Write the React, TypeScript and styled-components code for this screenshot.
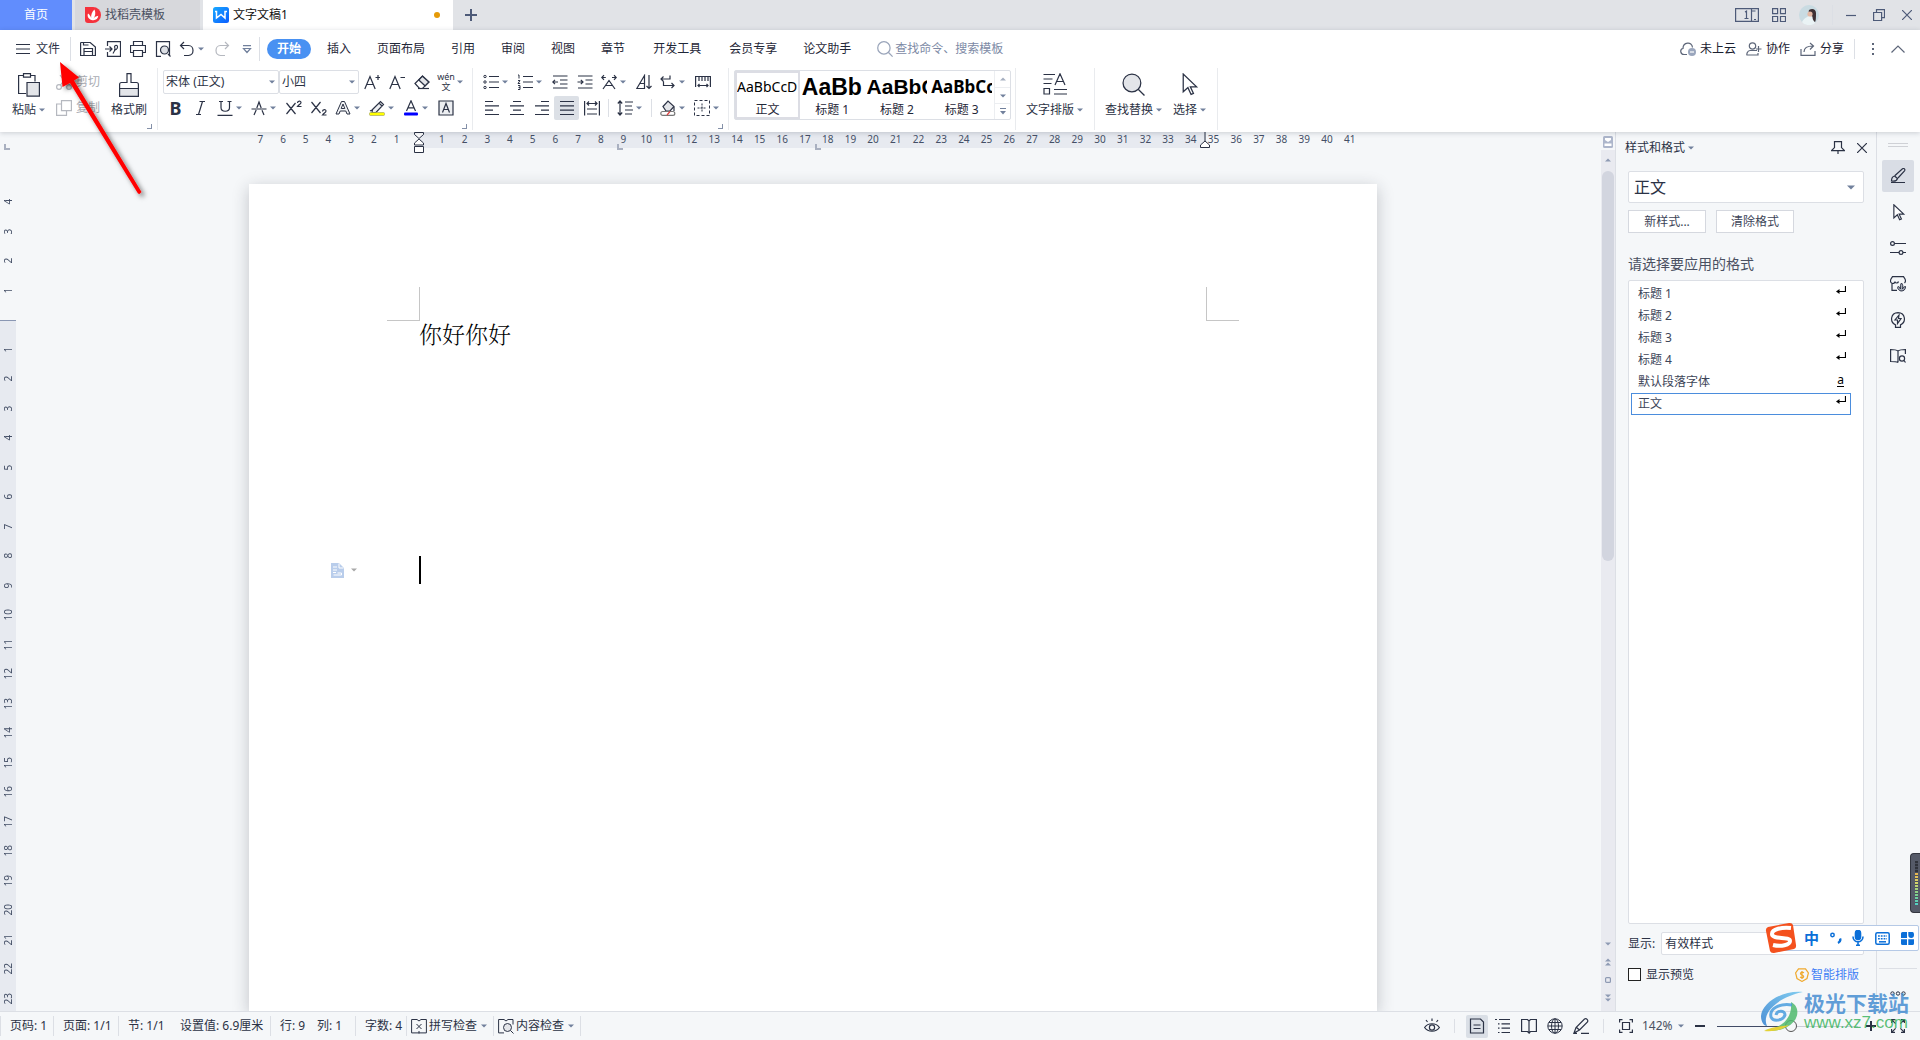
import React from 'react';
import styled, { createGlobalStyle, css } from 'styled-components';

const ink = '#2b3245';
const soft = '#71809c';
const line = '#dcdfe5';
const ui = `"Noto Sans", "Noto Sans CJK SC", sans-serif`;

const GlobalStyle = createGlobalStyle`
  *, *::before, *::after { box-sizing: border-box; }
  body { margin: 0; font: 12px/16px ${ui}; color: ${ink}; background: #f5f7f9; }
  button, input, select { font: inherit; color: inherit; margin: 0; padding: 0; border: 0; background: none; }
  button { white-space: nowrap; cursor: pointer; }
  svg { display: block; flex: none; }
  p, h2, ul { margin: 0; padding: 0; font-weight: 400; }
`;

/* ---------- icons ---------- */

type IconProps = { size?: number; w?: number; h?: number; color?: string; fill?: string; sw?: number; children: React.ReactNode };

const Icon = ({ size = 16, w, h, color = ink, fill = 'none', sw = 1.2, children }: IconProps) => (
  <svg
    width={w ?? size}
    height={h ?? size}
    viewBox={`0 0 ${w ?? size} ${h ?? size}`}
    fill={fill}
    stroke={color}
    strokeWidth={sw}
    aria-hidden="true"
  >
    {children}
  </svg>
);

const Caret = ({ color = soft, up = false }: { color?: string; up?: boolean }) => (
  <svg width="6" height="4" viewBox="0 0 6 4" aria-hidden="true">
    <path d={up ? 'M0 3.5h6L3 .5z' : 'M0 .5h6L3 3.5z'} fill={color} />
  </svg>
);

const icons = {
  save: <Icon><path d="M.6 1.5h9.6l5.2 4.6v8.4H13M.6 1.5v13H4M4 14.500V7.500h8.500v7H4M4.500 10.500h7.500M3.500 1.500v2.500h5" /></Icon>,
  exportPdf: <Icon><path d="M2.500 5V.6h13v14.800h-13V11M0 8h6.500M4.500 5.500 7 8l-2.500 2.500M8 12.500c2-3 2.500-5 1.500-6.500 0-2 3-2.500 3 0 0 2-2 3-3.500 3" /></Icon>,
  print: <Icon><path d="M3.500 4.500v-4h9v4M3.500 11.500h-3v-7h15v7h-3M3.500 9.500h9v6h-9z" /></Icon>,
  preview: <Icon><path d="M6 15.400H1.500V.6h13v14M13 13l2.500 2.500" /><circle cx="9.500" cy="9" r="4" fill="#dde0e5" /></Icon>,
  undo: <Icon><path d="M5 1 1.500 4.500 5 8M2 4.500h7.500c6 0 6 10 0 10H5" /></Icon>,
  redo: <Icon color="#b5b8bf"><path d="M11 1l3.500 3.500L11 8M14 4.500H6.500c-6 0-6 10 0 10H11" /></Icon>,
  more: <Icon w={10} h={9} color={soft}><path d="M1 .6h8M1.500 3.500h7L5 7.500z" /></Icon>,
  fontUp: <Icon><path d="M.8 15 6 2.500 11.200 15M2.600 10.500h6.800M11.500 3.500h5M14 1v5" /></Icon>,
  fontDown: <Icon><path d="M.8 15 6 2.500 11.200 15M2.600 10.500h6.800M11.500 3.500h4.500" /></Icon>,
  eraser: <Icon><path d="M1 9.500 8.500 2l6.500 6-6.500 6.500H5.500z" fill="#fff" /><path d="M4.800 6 11 11.800l3.800-3.800L8.500 2.200z" fill="#e3e5e9" /><path d="M4 14.500h11" /></Icon>,
  italic: <Icon><path d="M6.500 1.500H12M9.500 1.500l-4 13M3 14.500h5" /></Icon>,
  underline: <Icon><path d="M2 1.500h4M10.500 1.500h4M4 1.500v6c0 5 8.500 5 8.500 0v-6M.5 15.400h15" /></Icon>,
  strike: <Icon><path d="M3 15l2.200-5M5.800 8 8 2l2.200 6M11 10.200 13 15M.5 9h15" /></Icon>,
  sup: <Icon><path d="M.5 3l9 11M9.500 3l-9 11M11.500 3c0-2.500 3.500-2.500 3.500-.500 0 1.500-2 2-3.500 4h4" /></Icon>,
  sub: <Icon><path d="M.5 2l9 11M9.500 2l-9 11M11.500 11.500c0-2.500 3.500-2.500 3.500-.500 0 1.500-2 2-3.500 4h4" /></Icon>,
  effectA: <Icon><path d="M1 14 6.500 1.500h3L15 14h-3l-1.200-3H5.200L4 14zM6.200 8.500h3.600L8 4z" fill="#f2f3f5" strokeWidth="1" /></Icon>,
  highlight: <Icon><path d="M3.500 9.500l8-8 3 3-7.500 8h-4zM10 3l3 3M1 11l2-1" fill="#eef0f3" /><rect x=".5" y="12.500" width="15" height="3" rx="1" fill="#ff0" stroke="#9a9a60" strokeWidth=".6" /></Icon>,
  colorA: <Icon><path d="M3.500 11 8 .8 12.500 11M5 7.800h6" /><rect x="1" y="12.500" width="14" height="3" rx="1" fill="#00f" stroke="none" /></Icon>,
  shadeA: <Icon><path d="M1 1h14v14H1z" fill="#eceef1" /><path d="M4.500 12.500 8 3.500l3.500 9M5.700 9.500h4.600" /></Icon>,
  bullets: <Icon><path d="M6 2.500h10M6 8h10M6 13.500h10" /><g strokeWidth="1"><circle cx="2" cy="2.500" r="1.200" /><circle cx="2" cy="8" r="1.200" /><circle cx="2" cy="13.500" r="1.200" /></g></Icon>,
  numbers: <Icon><path d="M6 2.500h10M6 8h10M6 13.500h10" /><path strokeWidth="1" d="M1 1h1v3.500M1 6.500h2L1 9.500h2.200M1 11.500h2v4H1M1.500 13.500H3" /></Icon>,
  outdent: <Icon><path d="M1 2h14.500M8 6h7.500M8 10h7.500M1 14h14.500M.8 8H6M3 5.800.8 8 3 10.200" /></Icon>,
  indent: <Icon><path d="M1 2h14.500M8.500 6h7M8.500 10h7M1 14h14.500M.5 8h5.500M3.800 5.800 6 8l-2.200 2.200" /></Icon>,
  fitText: <Icon><path d="M2 15 8 6.500 14 15M4.500 11.500h7M.8 3.500h4M3 1.200.8 3.500 3 5.800M11 3.500h4.200M13 1.200l2.200 2.300L13 5.800" /></Icon>,
  sortA: <Icon><path d="M.8 14.500 8.500 1.500v13zM4 9.500h4.500M13 1v13.500M10.500 12l2.500 2.500 2.500-2.500" /></Icon>,
  wrapMark: <Icon><path d="M1 5h9V1.500M3.500 2.500 1 5l2.500 2.500M3.500 7.500v4h10.500M11.500 9l2.500 2.500-2.500 2.500" /></Icon>,
  rulerIcon: <Icon><path d="M.6 13V2.500h14.800V13M.6 8.500v4.500M4 3v4M7 3v4M10 3v4M13 3v4M3 11.500h10M4.500 10 3 11.500 4.500 13M11.500 10l1.500 1.500-1.500 1.500" /></Icon>,
  left: <Icon><path d="M1 1.500h8M1 5.800h14M1 10.200h8M1 14.500h14" /></Icon>,
  center: <Icon><path d="M4 1.500h8M1 5.800h14M4 10.200h8M1 14.500h14" /></Icon>,
  right: <Icon><path d="M7 1.500h8M1 5.800h14M7 10.200h8M1 14.500h14" /></Icon>,
  justify: <Icon><path d="M1 1.500h14M1 5.800h14M1 10.200h14M1 14.500h14" /></Icon>,
  distribute: <Icon><path d="M.6 1v14.500M15.400 1v14.500M3 3.500h10M5 1.500l-2 2 2 2M11 1.500l2 2-2 2M3 9h10M3 14h10" /></Icon>,
  spacing: <Icon><path d="M3 1v14M.8 3.500 3 1l2.200 2.500M.8 12.500 3 15l2.200-2.500M8 2h8M8 6h7M8 10h8M8 14h7" /></Icon>,
  fillPot: <Icon><path d="M3 6.500 8 1l6 5.500-4 4.500H6z" fill="#e3e5e9" /><path d="M14 7v4" /><rect x=".8" y="11.500" width="14" height="3.800" rx="1.900" fill="#fff" stroke="#777" /><path d="M7 15l3-3.500" stroke="#e04040" /></Icon>,
  borders: <Icon sw={1}><path d="M.5 .5h15v15H.5z" strokeDasharray="3 2" /><path d="M8 3.500v9M3.500 8h9" strokeDasharray="2 1" /></Icon>,
};

const PasteIcon = () => (
  <Icon w={22} h={24}><path d="M5 2.500H.6v18h7.500M13 2.500h4v6" /><path d="M5.500.6h7v3.500h-7z" /><path d="M9 9.500h12.400v13.600H9z" fill="#e3e5e9" /></Icon>
);
const BrushIcon = () => (
  <Icon w={20} h={24}><path d="M8 .6h4v8.900h5.500c1 0 1.900 1 1.900 2v11.900H.6V11.500c0-1 .9-2 1.900-2H8z" /><path d="M.6 15.500h18.800v7.900H.6z" fill="#e3e5e9" /></Icon>
);
const ScissorsIcon = () => (
  <Icon color="#b5b8bf"><circle cx="3" cy="13" r="2.400" /><circle cx="13" cy="13" r="2.400" /><path d="M4.500 11 12 1M11.500 11 4 1" /></Icon>
);
const CopyIcon = () => (
  <Icon color="#b5b8bf"><path d="M5.500.6h9.900v10H5.500z" /><path d="M5.500 4H.6v11.400h9.900v-4.800" /></Icon>
);
const CursorIcon = ({ s = 22 }: { s?: number }) => (
  <svg width={s} height={s} viewBox="0 0 22 22" fill="#fff" stroke={ink} strokeWidth={s > 20 ? 1.2 : 1.5} aria-hidden="true">
    <path d="M5 1v17l4.500-4 3 6.500 2.300-1-3-6.300h6z" />
  </svg>
);
const SearchIcon = ({ s = 16, color = '#9aa5ba', fill = 'none' }: { s?: number; color?: string; fill?: string }) => (
  <svg width={s} height={s} viewBox="0 0 22 22" fill={fill} stroke={color} strokeWidth={s > 20 ? 1.2 : 1.7} aria-hidden="true">
    <circle cx="9.500" cy="9.500" r="8.500" /><path d="M15.500 15.500 21.500 21.500" />
  </svg>
);

/* ---------- window shell ---------- */

const Window = styled.div`
  position: relative;
  height: 100vh;
  display: flex;
  flex-direction: column;
  overflow: hidden;
`;

const TitleBar = styled.header`
  display: flex;
  gap: 3px;
  height: 30px;
  flex: none;
  background: #e1e3e7;
`;

const Tab = styled.button<{ $kind: 'home' | 'idle' | 'active' }>`
  display: flex;
  align-items: center;
  gap: 4px;
  padding: 0 10px;
  width: ${p => ({ home: 72, idle: 125, active: 250 }[p.$kind])}px;
  justify-content: ${p => (p.$kind === 'home' ? 'center' : 'flex-start')};
  background: ${p => ({ home: '#618dfd', idle: '#d7d8dc', active: '#fff' }[p.$kind])};
  color: ${p => ({ home: '#fff', idle: '#4a5061', active: '#111' }[p.$kind])};
`;

const ModifiedDot = styled.span`
  width: 6px;
  height: 6px;
  margin: 0 3px 0 auto;
  border-radius: 50%;
  background: #e59a08;
`;

const IconButton = styled.button<{ $w?: number }>`
  display: flex;
  align-items: center;
  justify-content: center;
  width: ${p => p.$w ?? 24}px;
`;

const WindowControls = styled.div`
  display: flex;
  align-items: center;
  gap: 13px;
  margin-left: auto;
  padding-right: 8px;
`;

const VLine = styled.span<{ $h?: number; $m?: number }>`
  width: 1px;
  height: ${p => p.$h ?? 24}px;
  margin: 0 ${p => p.$m ?? 0}px;
  flex: none;
  background: ${line};
`;

const Ribbon = styled.div`
  position: relative;
  z-index: 2;
  flex: none;
  background: #fff;
  box-shadow: 0 1px 5px rgba(30, 40, 60, 0.2);
`;

const MenuRow = styled.nav`
  display: flex;
  align-items: center;
  height: 38px;
`;

const FileButton = styled.button`
  display: flex;
  align-items: center;
  gap: 6px;
  padding: 0 10px 0 16px;
`;

const Tool = styled.button<{ $on?: boolean; $caret?: boolean }>`
  display: flex;
  align-items: center;
  gap: 3px;
  width: ${p => (p.$caret ? 34 : 25)}px;
  height: 24px;
  padding-left: ${p => (p.$caret ? 4 : 0)}px;
  justify-content: ${p => (p.$caret ? 'flex-start' : 'center')};
  border-radius: 2px;
  background: ${p => (p.$on ? '#dce0e6' : 'none')};
  overflow: visible;
`;

const QuickTools = styled.div`
  display: flex;
  padding: 0 0 0 4px;
`;

const MenuTabs = styled.div`
  display: flex;
  align-items: center;
  padding-left: 7px;
`;

const MenuTab = styled.button<{ $on?: boolean; $wide?: boolean }>`
  height: 20px;
  padding: 0 ${p => (p.$wide ? 15 : 13)}px;
  color: #1f2738;
  ${p => p.$on && css`
    margin-right: 3px;
    padding: 0 10px;
    border-radius: 10px;
    color: #fff;
    font-weight: 700;
    background: #4991f2;
  `}
`;

const SearchBox = styled.label`
  display: flex;
  align-items: center;
  gap: 2px;
  margin-left: 13px;
  input { width: 120px; outline: 0; }
  input::placeholder { color: #7d8aa5; opacity: 1; }
`;

const CloudActions = styled.div`
  display: flex;
  align-items: center;
  gap: 10px;
  margin-left: auto;
  padding-right: 15px;
`;

const CloudAction = styled.button`
  display: flex;
  align-items: center;
  gap: 4px;
  color: #1a2030;
`;

const Groups = styled.div`
  display: flex;
  height: 64px;
`;

const Group = styled.section<{ $l?: number; $r?: number }>`
  position: relative;
  display: flex;
  gap: 11px;
  height: 62px;
  padding: 2px ${p => p.$r ?? 4}px 0 ${p => p.$l ?? 5}px;
  border-right: 1px solid #e9ebee;
`;

const Launcher = styled.button`
  position: absolute;
  right: 5px;
  bottom: 1px;
  width: 5px;
  height: 5px;
  border: solid #8490a8;
  border-width: 0 1px 1px 0;
`;

const Stack = styled.div`
  display: flex;
  flex-direction: column;
  gap: 2px;
`;

const Row = styled.div<{ $gap?: number }>`
  display: flex;
  align-items: center;
  height: 24px;
  gap: ${p => p.$gap ?? 0}px;
`;

const BigTool = styled.button`
  display: flex;
  flex-direction: column;
  align-items: center;
  justify-content: space-between;
  height: 48px;
  padding-top: 3px;
`;

const Labelled = styled.span`
  display: flex;
  align-items: center;
  gap: 3px;
`;

const SmallTool = styled.button`
  display: flex;
  align-items: center;
  gap: 4px;
  height: 24px;
  color: #a9acb3;
`;

const Picker = styled.label<{ $w?: number; $grow?: boolean; $h?: number; $inset?: number; $size?: number; $edge?: number }>`
  position: relative;
  display: flex;
  align-items: center;
  width: ${p => (p.$w ? `${p.$w}px` : 'auto')};
  height: ${p => p.$h ?? 24}px;
  flex: ${p => (p.$grow ? '1' : 'none')};
  border: 1px solid ${line};
  border-radius: 2px;
  background: #fff;
  select {
    appearance: none;
    width: 100%;
    height: 100%;
    padding-left: ${p => p.$inset ?? 2}px;
    font-size: ${p => p.$size ?? 12}px;
    outline: 0;
  }
  svg { position: absolute; right: ${p => p.$edge ?? 3}px; pointer-events: none; }
`;

const Pinyin = styled.span`
  display: flex;
  flex-direction: column;
  align-items: center;
  width: 16px;
  font-size: 9px;
  line-height: 10px;
`;

const BoldGlyph = styled.b`
  font-size: 18px;
  line-height: 24px;
`;

const Gallery = styled.div`
  display: flex;
  width: 277px;
  height: 50px;
  border: 1px solid ${line};
  border-radius: 2px;
`;

const StyleCard = styled.button<{ $on?: boolean }>`
  flex: 1;
  min-width: 0;
  display: flex;
  flex-direction: column;
  align-items: center;
  justify-content: flex-end;
  height: 48px;
  padding-bottom: 1px;
  overflow: hidden;
  color: #1f2738;
  box-shadow: ${p => (p.$on ? 'inset 0 0 0 2px #dcdde4' : 'none')};
`;

const Sample = styled.span<{ $size: number; $face: string; $bold?: boolean }>`
  display: block;
  align-self: stretch;
  margin: 0 2px;
  overflow: hidden;
  text-align: left;
  color: #000;
  line-height: 30px;
  font-size: ${p => p.$size}px;
  font-weight: ${p => (p.$bold ? 700 : 400)};
  font-family: "${p => p.$face}", sans-serif;
`;

const GalleryScroll = styled.div`
  display: grid;
  grid-template-rows: repeat(3, 1fr);
  width: 16px;
  border-left: 1px solid #eceef1;
  button { display: flex; align-items: center; justify-content: center; }
  button + button { border-top: 1px solid #eceef1; }
`;

/* ---------- workspace ---------- */

const Workspace = styled.main`
  display: flex;
  flex: 1;
  min-height: 0;
`;

const VRuler = styled.div`
  width: 16px;
  flex: none;
  padding-top: 55px;
  overflow: hidden;
  background: linear-gradient(#f5f7f9 188px, #8a97b3 188px, #8a97b3 189px, #e7eaf0 189px);
`;

const VScale = styled.div`
  display: grid;
  grid-template-rows: repeat(28, 1fr);
  height: 826px;
  font-size: 10px;
  line-height: 16px;
  color: #444f66;
  span { writing-mode: vertical-rl; transform: rotate(180deg); text-align: center; width: 16px; }
`;

const Center = styled.div`
  flex: 1;
  min-width: 0;
  display: flex;
  flex-direction: column;
`;

const HRuler = styled.div`
  display: flex;
  justify-content: center;
  height: 16px;
  flex: none;
  padding-left: 9px;
`;

const HStrip = styled.div`
  position: relative;
  width: 1128px;
  background: linear-gradient(90deg, transparent 171px, #e7eaf0 171px, #e7eaf0 957px, transparent 957px);
`;

const HScale = styled.div`
  display: grid;
  grid-template-columns: repeat(49, 1fr);
  width: 1112px;
  font-size: 10px;
  line-height: 15px;
  text-align: center;
  color: #444f66;
`;

const Marker = styled.span<{ $x: number; $y?: number }>`
  position: absolute;
  left: ${p => p.$x}px;
  top: ${p => p.$y ?? 0}px;
`;

const Canvas = styled.div`
  flex: 1;
  min-height: 0;
  display: flex;
  justify-content: center;
  padding: 36px 0 0 9px;
  overflow: hidden;
`;

const Page = styled.article`
  width: 1128px;
  padding-top: 103px;
  background: #fff;
  box-shadow: 0 4px 16px rgba(30, 35, 45, 0.24);
`;

const Corners = styled.div`
  display: flex;
  justify-content: space-between;
  padding: 0 138px;
`;

const Corner = styled.span<{ $side: 'left' | 'right' }>`
  width: 33px;
  height: 34px;
  border-bottom: 1px solid #c6c6c6;
  border-${p => (p.$side === 'left' ? 'right' : 'left')}: 1px solid #c6c6c6;
`;

const BodyText = styled.p`
  padding-left: 170px;
  font: 300 23px/26px "Noto Serif CJK SC", "Noto Sans CJK SC", serif;
  color: #000;
`;

const CaretLine = styled.div`
  display: flex;
  align-items: center;
  height: 28px;
  margin-top: 209px;
  padding-left: 82px;
`;

const PasteTag = styled.button`
  display: flex;
  align-items: center;
  gap: 7px;
  width: 88px;
`;

const TextCursor = styled.span`
  width: 2px;
  height: 28px;
  background: #000;
`;

const ScrollColumn = styled.div`
  display: flex;
  flex-direction: column;
  align-items: center;
  width: 14px;
  flex: none;
  padding: 4px 0;
  background: linear-gradient(#f5f7f9 18px, #e9eaf0 18px);
`;

const ScrollTrack = styled.div`
  flex: 1;
  width: 12px;
`;

const ScrollThumb = styled.div`
  height: 51%;
  border-radius: 6px;
  background: #d2d5df;
`;

const ScrollButton = styled.button<{ $h?: number }>`
  display: flex;
  flex-direction: column;
  align-items: center;
  justify-content: center;
  width: 14px;
  height: ${p => p.$h ?? 18}px;
`;

/* ---------- style panel ---------- */

const Panel = styled.aside`
  display: flex;
  flex-direction: column;
  width: 262px;
  flex: none;
  padding: 0 12px 0 12px;
  border: solid ${line};
  border-width: 0 1px;
`;

const PanelHead = styled.div`
  display: flex;
  align-items: center;
  justify-content: space-between;
  height: 31px;
  margin: 0 -3px 8px;
`;

const PanelButtons = styled.div`
  display: flex;
  gap: 10px;
  margin-top: 7px;
  button { width: 78px; height: 23px; border: 1px solid #d5d8df; background: #fff; color: #3d4558; }
`;

const PanelTitle = styled.h2`
  margin: 21px 0 6px;
  font-size: 14px;
  line-height: 20px;
  color: #4a5061;
`;

const StyleList = styled.ul`
  flex: 1;
  padding: 2px 12px 0 2px;
  list-style: none;
  border: 1px solid ${line};
  border-radius: 2px;
  background: #fff;
`;

const StyleItem = styled.li<{ $on?: boolean }>`
  display: flex;
  align-items: center;
  justify-content: space-between;
  height: 22px;
  padding: 0 4px 0 6px;
  color: #3d4558;
  border: 1px solid ${p => (p.$on ? '#4b8ddd' : 'transparent')};
  svg { margin-bottom: 8px; }
`;

const UnderA = styled.span`
  margin: 0 2px 4px 0;
  line-height: 12px;
  border-bottom: 1px solid #000;
  color: #000;
`;

const PanelRow = styled.div`
  display: flex;
  align-items: center;
  justify-content: space-between;
  gap: 6px;
  margin-top: 8px;
  height: 23px;
`;

const Check = styled.label`
  display: flex;
  align-items: center;
  gap: 5px;
  input { appearance: none; width: 13px; height: 13px; border: 1px solid #222; background: #fff; }
`;

const SmartLink = styled.a`
  display: flex;
  align-items: center;
  gap: 2px;
  margin-right: 5px;
  color: #3f7ef5;
  text-decoration: none;
`;

const PanelFoot = styled.div`
  height: 56px;
  display: flex;
  flex-direction: column;
`;

const Rail = styled.nav`
  display: flex;
  flex-direction: column;
  align-items: center;
  gap: 4px;
  width: 43px;
  flex: none;
  padding: 11px 1px 0 0;
`;

const Grip = styled.span`
  width: 20px;
  height: 4px;
  margin-bottom: 9px;
  border: solid #cfd1d6;
  border-width: 1px 0;
`;

const RailButton = styled.button<{ $on?: boolean }>`
  display: flex;
  align-items: center;
  justify-content: center;
  width: 32px;
  height: 32px;
  border-radius: 2px;
  background: ${p => (p.$on ? '#d9dde5' : 'none')};
`;

const RailFoot = styled.div`
  display: flex;
  justify-content: center;
  width: 38px;
  height: 43px;
  margin-top: auto;
  padding-top: 22px;
  border-top: 1px solid ${line};
`;

/* ---------- status bar ---------- */

const StatusBar = styled.footer`
  display: flex;
  align-items: center;
  justify-content: space-between;
  height: 29px;
  flex: none;
  border-top: 1px solid ${line};
`;

const StatusGroup = styled.div`
  display: flex;
  align-items: center;
`;

const StatusText = styled.span<{ $w: number }>`
  width: ${p => p.$w}px;
  padding-left: 9px;
  white-space: nowrap;
`;

const StatusButton = styled.button`
  display: flex;
  align-items: center;
  gap: 2px;
  padding: 0 6px 0 4px;
  svg:last-child { margin-left: 2px; }
`;

const ViewButton = styled.button<{ $on?: boolean }>`
  display: flex;
  align-items: center;
  justify-content: center;
  width: 22px;
  height: 23px;
  margin: 0 2px;
  border-radius: 2px;
  background: ${p => (p.$on ? '#dadfe6' : 'none')};
`;

const ZoomValue = styled.button`
  display: flex;
  align-items: center;
  gap: 5px;
  width: 53px;
  margin-left: 3px;
  color: #4a5061;
`;

const ZoomSlider = styled.input`
  appearance: none;
  width: 141px;
  height: 14px;
  margin: 0 8px 0 12px;
  background: linear-gradient(90deg, #414b66 53%, #c9cdd6 53%) center / 100% 1px no-repeat;
  &::-webkit-slider-thumb {
    appearance: none;
    width: 12px;
    height: 12px;
    border: 1px solid #555;
    border-radius: 50%;
    background: #f5f7f9;
  }
`;

const ScreenButtons = styled.div`
  padding: 0 9px;
`;

/* ---------- floating overlays ---------- */

const Floating = styled.div<{ $right: number; $bottom: number }>`
  position: absolute;
  z-index: 5;
  right: ${p => p.$right}px;
  bottom: ${p => p.$bottom}px;
  display: flex;
  align-items: center;
`;

const ImeBar = styled.div`
  display: flex;
  align-items: center;
  justify-content: space-between;
  width: 138px;
  height: 26px;
  padding: 0 4px 0 22px;
  margin-left: -16px;
  border: 1px solid #b5c9e6;
  border-radius: 2px;
  background: #fff;
  font-weight: 700;
  font-size: 15px;
  color: #0b6fd8;
`;

const SogouMark = styled.span`
  position: relative;
  z-index: 1;
`;

const LevelMeter = styled.div`
  display: flex;
  justify-content: flex-end;
  width: 10px;
  height: 60px;
  padding: 7px 2px 7px 4px;
  border: 1px solid #33363f;
  border-right: 0;
  border-radius: 4px 0 0 4px;
  background: #555a68;
  i {
    width: 4px;
    background:
      repeating-linear-gradient(transparent 0 2px, #4a4e5b 2px 3px),
      linear-gradient(#2f323a 25%, #e8b04c 26%, #d5d56a 50%, #7fd08a 75%, #4fd0c8);
  }
`;

const Watermark = styled.div`
  display: flex;
  flex-direction: column;
  font: 700 21px/22px "Noto Sans CJK SC", sans-serif;
  color: rgba(62, 137, 208, 0.82);
  small { font: 500 17px/20px "Liberation Sans", sans-serif; color: rgba(60, 180, 95, 0.85); }
`;

const ArrowLayer = styled.svg`
  position: absolute;
  z-index: 6;
  left: 50px;
  top: 55px;
  pointer-events: none;
`;

/* ---------- pieces ---------- */

type ToolName = keyof typeof icons;
const T = ({ name, label, caret, on }: { name: ToolName; label: string; caret?: boolean; on?: boolean }) => (
  <Tool aria-label={label} $caret={caret} $on={on}>
    {icons[name]}
    {caret && <Caret />}
  </Tool>
);

const menu: { text: string; wide?: boolean }[] = [
  { text: '插入' }, { text: '页面布局' }, { text: '引用' }, { text: '审阅' }, { text: '视图' }, { text: '章节' },
  { text: '开发工具', wide: true }, { text: '会员专享' }, { text: '论文助手' },
];

const cards = [
  { sample: 'AaBbCcD', name: '正文', size: 14, face: 'Noto Sans', bold: false },
  { sample: 'AaBb', name: '标题 1', size: 23, face: 'Liberation Sans', bold: true },
  { sample: 'AaBbC', name: '标题 2', size: 21, face: 'Liberation Sans', bold: true },
  { sample: 'AaBbCc', name: '标题 3', size: 17, face: 'Noto Sans', bold: true },
];

const listed = ['标题 1', '标题 2', '标题 3', '标题 4', '默认段落字体', '正文'];
const horizontal = Array.from({ length: 49 }, (_, i) => i - 7);
const vertical = Array.from({ length: 28 }, (_, i) => i - 4);

const Return = () => (
  <Icon w={10} h={9} color="#000"><path d="M9.500 0v5.500H2" /><path d="M0 5.500 3.500 3v5z" fill="#000" stroke="none" /></Icon>
);

const Title = () => (
  <TitleBar>
    <Tab $kind="home">首页</Tab>
    <Tab $kind="idle">
      <Icon color="none"><path d="M0 0h8a8 8 0 0 1 0 16H3a3 3 0 0 1-3-3z" fill="#f5323c" /><path d="M6.500 13C3 11.500 2 9 3 6.500c1.500 1 2.500 2.500 3.200 4.500C5.800 8 7 4.500 9.500 2.500c1.500 3.500.8 6.500-1.200 9.500 1-1.500 2.700-3 5-3.200-.3 3-2.800 5.200-6.800 4.200z" fill="#fff" /></Icon>
      找稻壳模板
    </Tab>
    <Tab $kind="active">
      <Icon color="none"><defs><linearGradient id="w" x2="1" y2="1"><stop stopColor="#19a9ff" /><stop offset="1" stopColor="#0a5cff" /></linearGradient></defs><rect width="16" height="16" rx="2.500" fill="url(#w)" /><path d="M2 4.500h1.500V11L8 7.500l4 3.500V4.500h2" fill="none" stroke="#fff" strokeWidth="1.500" /></Icon>
      文字文稿1
      <ModifiedDot />
    </Tab>
    <IconButton aria-label="新建标签" $w={30}><Icon w={12} h={12} sw={2} color="#4d5a78"><path d="M6 0v12M0 6h12" /></Icon></IconButton>
    <WindowControls>
      <IconButton aria-label="窗口布局"><Icon w={24} h={14} color="#4d5a78"><path d="M.6.6h22.800v12.800H.6zM16.500.6v12.800M10 4l1.500-1v7.500M9.500 10.500h4M19 11.500h2M20.500 3h-4" /></Icon></IconButton>
      <IconButton aria-label="应用" $w={14}><Icon size={14} color="#4d5a78"><path d="M.6.600h5v5h-5zM8.500.600h5v5h-5zM.6 8.500h5v5h-5zM8.500 8.500h5v5h-5z" /></Icon></IconButton>
      <IconButton aria-label="账户" $w={20}><Icon size={20} color="none"><circle cx="10" cy="10" r="10" fill="#c9dbe2" /><path d="M3 17c3-5 6-5 8-7l3 1 2 7c-3 3-10 3-13-1z" fill="#eaf3f5" /><path d="M10 5c3-2 7-1 7 3s0 8-1 9c-3-2-2-5-3-6-2 1-4-3-3-6z" fill="#3d3034" /><circle cx="11" cy="9" r="2.600" fill="#e5b9a5" /></Icon></IconButton>
      <VLine $h={20} />
      <IconButton aria-label="最小化" $w={10}><Icon w={10} h={10} color="#4d5a78"><path d="M0 5.500h10" /></Icon></IconButton>
      <IconButton aria-label="还原" $w={20}><Icon w={12} h={12} color="#4d5a78"><path d="M.6 3.500h8v8h-8zM3.500 3.500V.6h8v8H8.600" /></Icon></IconButton>
      <IconButton aria-label="关闭" $w={10}><Icon w={10} h={10} color="#4d5a78"><path d="M0 0l10 10M10 0 0 10" /></Icon></IconButton>
    </WindowControls>
  </TitleBar>
);

const Menu = () => (
  <MenuRow>
    <FileButton><Icon w={14} h={10} sw={1}><path d="M0 .5h14M0 5h14M0 9.500h14" /></Icon>文件</FileButton>
    <VLine />
    <QuickTools>
      <T name="save" label="保存" /><T name="exportPdf" label="输出为PDF" /><T name="print" label="打印" /><T name="preview" label="打印预览" />
      <T name="undo" label="撤销" caret /><T name="redo" label="恢复" /><T name="more" label="更多" />
    </QuickTools>
    <VLine />
    <MenuTabs>
      <MenuTab $on>开始</MenuTab>
      {menu.map(m => <MenuTab key={m.text} $wide={m.wide}>{m.text}</MenuTab>)}
    </MenuTabs>
    <SearchBox>
      <SearchIcon s={16} />
      <input placeholder="查找命令、搜索模板" aria-label="查找命令、搜索模板" />
    </SearchBox>
    <CloudActions>
      <CloudAction><Icon color="#5d6679"><path d="M7 13.500H4C0 13.500-.3 8 3 7.500 3 1 12 0 12.500 6.500" /><circle cx="12" cy="11" r="4" fill="#9aa6bd" stroke="none" /><path d="M10 11h4" stroke="#fff" /></Icon>未上云</CloudAction>
      <CloudAction><Icon color="#5d6679"><circle cx="6.500" cy="5" r="3.200" /><path d="M11 9.500H4c-3 0-3.500 4.500-3 4.500h11v-2M12.500 5v6M10 8h5.500" /></Icon>协作</CloudAction>
      <CloudAction><Icon color="#5d6679"><path d="M1 8v6.400h14V10M4 11c0-4 3-6 9-6M10 2l3.500 3L10 8.500" /></Icon>分享</CloudAction>
      <VLine $h={20} />
      <IconButton aria-label="更多" $w={16}><Icon w={4} h={12} color="none"><path d="M1 0h2v2H1zM1 5h2v2H1zM1 10h2v2H1z" fill="#5d6679" /></Icon></IconButton>
      <IconButton aria-label="收起功能区" $w={14}><Icon w={14} h={8} color="#5d6679"><path d="M.5 7.500 7 1l6.500 6.500" /></Icon></IconButton>
    </CloudActions>
  </MenuRow>
);

const Tools = () => (
  <Groups>
    <Group $l={12} $r={10} aria-label="剪贴板">
      <BigTool><PasteIcon /><Labelled>粘贴 <Caret /></Labelled></BigTool>
      <Stack>
        <SmallTool><ScissorsIcon />剪切</SmallTool>
        <SmallTool><CopyIcon />复制</SmallTool>
      </Stack>
      <BigTool><BrushIcon />格式刷</BigTool>
      <Launcher aria-label="剪贴板选项" />
    </Group>
    <Group aria-label="字体">
      <Stack>
        <Row>
          <Picker $w={116}><select aria-label="字体"><option>宋体 (正文)</option></select><Caret /></Picker>
          <Picker $w={80}><select aria-label="字号"><option>小四</option></select><Caret /></Picker>
          <T name="fontUp" label="增大字号" /><T name="fontDown" label="减小字号" /><T name="eraser" label="清除格式" />
          <Tool aria-label="拼音指南" $caret><Pinyin><span>wén</span><span>文</span></Pinyin><Caret /></Tool>
        </Row>
        <Row>
          <Tool aria-label="加粗"><BoldGlyph>B</BoldGlyph></Tool>
          <T name="italic" label="倾斜" /><T name="underline" label="下划线" caret /><T name="strike" label="删除线" caret />
          <T name="sup" label="上标" /><T name="sub" label="下标" /><T name="effectA" label="文字效果" caret />
          <T name="highlight" label="突出显示" caret /><T name="colorA" label="字体颜色" caret /><T name="shadeA" label="字符底纹" />
        </Row>
      </Stack>
      <Launcher aria-label="字体选项" />
    </Group>
    <Group $l={6} aria-label="段落">
      <Stack>
        <Row>
          <T name="bullets" label="项目符号" caret /><T name="numbers" label="编号" caret /><T name="outdent" label="减少缩进" /><T name="indent" label="增加缩进" />
          <T name="fitText" label="中文版式" caret /><T name="sortA" label="排序" /><T name="wrapMark" label="显示标记" caret /><T name="rulerIcon" label="制表位" />
        </Row>
        <Row>
          <T name="left" label="左对齐" /><T name="center" label="居中" /><T name="right" label="右对齐" /><T name="justify" label="两端对齐" on /><T name="distribute" label="分散对齐" />
          <VLine $h={18} $m={4} /><T name="spacing" label="行距" caret /><VLine $h={18} $m={4} />
          <T name="fillPot" label="底纹颜色" caret /><T name="borders" label="边框" caret />
        </Row>
      </Stack>
      <Launcher aria-label="段落选项" />
    </Group>
    <Group aria-label="样式">
      <Gallery>
        {cards.map((c, i) => (
          <StyleCard key={c.name} $on={i === 0}><Sample $size={c.size} $face={c.face} $bold={c.bold}>{c.sample}</Sample>{c.name}</StyleCard>
        ))}
        <GalleryScroll>
          <button aria-label="上一行"><Caret up color="#a5afc0" /></button>
          <button aria-label="下一行"><Caret /></button>
          <button aria-label="更多样式"><Icon w={6} h={7} color={soft} sw={1}><path d="M0 .5h6" /><path d="M0 3h6L3 6.500z" fill={soft} stroke="none" /></Icon></button>
        </GalleryScroll>
      </Gallery>
    </Group>
    <Group $l={10} $r={11} aria-label="排版">
      <BigTool>
        <Icon w={24} h={22}><path d="M.5 1.500H12M.5 6h9M.5 10.500h8M1 15.500h5.500v5.500H1zM11 16.500h13M11 21h13M12 12 17 .8 22 12M14 8.500h6" /></Icon>
        <Labelled>文字排版 <Caret /></Labelled>
      </BigTool>
    </Group>
    <Group $l={10} $r={11} aria-label="编辑">
      <BigTool><SearchIcon s={23} color={ink} fill="#e3e5e9" /><Labelled>查找替换 <Caret /></Labelled></BigTool>
      <BigTool><CursorIcon s={23} /><Labelled>选择 <Caret /></Labelled></BigTool>
    </Group>
  </Groups>
);

const TabStop = () => <Icon w={6} h={6} sw={2} color="#a9b0c0"><path d="M1 0v5h5" /></Icon>;

const Document = () => (
  <Center>
    <HRuler>
      <HStrip>
        <HScale>{horizontal.map(n => <span key={n}>{n === 0 ? '' : Math.abs(n)}</span>)}</HScale>
        <Marker $x={165}><Icon w={10} h={22} sw={1} fill="#fff"><path d="M.5.5h9v2L5 6.500.5 2.500zM.5 13V11L5 7l4.500 4v2zM.5 14.500h9v6h-9z" /></Icon></Marker>
        <Marker $x={368} $y={12}><TabStop /></Marker>
        <Marker $x={566} $y={12}><TabStop /></Marker>
        <Marker $x={951}><Icon w={10} h={16} sw={1} fill="#fff"><path d="M5 0v10M.5 15.500V13L5 9l4.500 4v2.500z" /></Icon></Marker>
        <Marker $x={-245} $y={12}><TabStop /></Marker>
      </HStrip>
    </HRuler>
    <Canvas>
      <Page>
        <Corners><Corner $side="left" /><Corner $side="right" /></Corners>
        <BodyText>你好你好</BodyText>
        <CaretLine>
          <PasteTag aria-label="粘贴选项">
            <Icon w={13} h={15} color="none"><path d="M0 0h8l5 5v10H0z" fill="#b9cdeb" /><path d="M8 .5V5h4.500M2 4h4M2 7h4M2 9.500h3M2.500 12h8v-2h-4" stroke="#fff" strokeWidth="1" fill="none" /></Icon>
            <Caret color="#a8a8a8" />
          </PasteTag>
          <TextCursor />
        </CaretLine>
      </Page>
    </Canvas>
  </Center>
);

const Scroll = () => (
  <ScrollColumn>
    <Icon w={10} h={12} color="none"><rect width="10" height="12" rx="1.500" fill="#adb6cb" /><path d="M2 2h6v2L5 6 2 4zM1.500 7.500h7V10h-7z" fill="#fff" /></Icon>
    <ScrollButton aria-label="向上滚动" $h={23}><Caret up color="#8e9ab3" /></ScrollButton>
    <ScrollTrack><ScrollThumb /></ScrollTrack>
    <ScrollButton aria-label="向下滚动"><Caret color="#8e9ab3" /></ScrollButton>
    <ScrollButton aria-label="上一页"><Caret up color="#8e9ab3" /><Caret up color="#8e9ab3" /></ScrollButton>
    <ScrollButton aria-label="浏览对象"><Icon w={6} h={6} color="#8e9ab3"><rect x=".6" y=".6" width="4.800" height="4.800" rx="1" /></Icon></ScrollButton>
    <ScrollButton aria-label="下一页"><Caret color="#8e9ab3" /><Caret color="#8e9ab3" /></ScrollButton>
  </ScrollColumn>
);

const StylePanel = () => (
  <Panel>
    <PanelHead>
      <Labelled>样式和格式 <Caret /></Labelled>
      <Row $gap={12}>
        <IconButton aria-label="固定" $w={14}><Icon w={14} h={13}><path d="M3.500.6h7v6l2.900 3H.6l2.900-3zM7 9.600V13" /></Icon></IconButton>
        <IconButton aria-label="关闭面板" $w={10}><Icon w={10} h={10}><path d="M0 0l10 10M10 0 0 10" /></Icon></IconButton>
      </Row>
    </PanelHead>
    <Picker $h={32} $inset={5} $size={16} $edge={8}>
      <select aria-label="当前样式"><option>正文</option></select>
      <Icon w={8} h={5} color="none"><path d="M0 .5h8L4 4.500z" fill={soft} /></Icon>
    </Picker>
    <PanelButtons><button>新样式...</button><button>清除格式</button></PanelButtons>
    <PanelTitle>请选择要应用的格式</PanelTitle>
    <StyleList>
      {listed.map(name => (
        <StyleItem key={name} $on={name === '正文'}>{name}{name === '默认段落字体' ? <UnderA>a</UnderA> : <Return />}</StyleItem>
      ))}
    </StyleList>
    <PanelRow>
      <span>显示:</span>
      <Picker $grow $h={23} $inset={3}><select aria-label="显示"><option>有效样式</option></select><Caret /></Picker>
    </PanelRow>
    <PanelFoot>
      <PanelRow>
        <Check><input type="checkbox" />显示预览</Check>
        <SmartLink href="#">
          <Icon size={14} color="#f0a92e"><path d="M3.500.8h7L13.400 5 12 10.500 7 13.400 2 10.500.6 5zM9 4.800C6 3 4 6 7 7s1.500 4-2 2M7 3v8" /></Icon>智能排版
        </SmartLink>
      </PanelRow>
    </PanelFoot>
  </Panel>
);

const SideRail = () => (
  <Rail>
    <Grip />
    <RailButton $on aria-label="样式和格式"><Icon><path d="M1 14.500h14M1.500 13c0-3 1-4.500 3-5l3 2.500c-.5 2-3 3-6 2.500zM5 7.500l7.500-6.700c1.500-1 3 .7 2 2L8 10" /></Icon></RailButton>
    <RailButton aria-label="选择"><CursorIcon s={17} /></RailButton>
    <RailButton aria-label="属性"><Icon><circle cx="2.500" cy="3.500" r="1.900" /><path d="M4.500 3.500H16M0 12.500h9M13 12.500h3" /><circle cx="11" cy="12.500" r="1.900" /></Icon></RailButton>
    <RailButton aria-label="稻壳资源"><Icon><path d="M2 7.500v6.900h5M14.500 7c1.500-1.500 1-3 .5-4l-1.500-2.400H2.500L1 3C0 5 .5 7 2.500 7.500 4 7.500 5 7 5 5.500c0 2 3 2 3.500 0" /><path d="M11 15c-3-1-4-3-3-4.500 1 0 2 1.500 2.500 2.500-.5-3 0-4.500 1-6 1.500 1.500 1.500 3.500 1 6 .5-1.500 1.500-2.500 3-2.500 0 3-1.500 4.500-4.500 4.500z" fill="#a9aeba" strokeWidth="1" /></Icon></RailButton>
    <RailButton aria-label="智能助手"><Icon><path d="M5.500 15.400h5v-2.500c6-3 5-12-2.500-12.300C.5.900-.5 9.900 5.500 12.900z" /><path d="M9 3 5 8h2.500v3.500L11 6.500H8.500z" /></Icon></RailButton>
    <RailButton aria-label="阅读"><Icon><path d="M8 14.500V3C6 1.500 3 1.500.6 1.500v12C3 13.500 6 13.500 8 14.500M8 3c2-1.500 5-1.500 7.400-1.500V6" /><circle cx="12" cy="10.500" r="2.600" /><path d="M14 12.500l1.500 2" /></Icon></RailButton>
    <RailFoot><Icon w={16} h={5} sw={1}><circle cx="2.500" cy="2.500" r="1.700" /><circle cx="8" cy="2.500" r="1.700" /><circle cx="13.500" cy="2.500" r="1.700" /></Icon></RailFoot>
  </Rail>
);

const Status = () => (
  <StatusBar>
    <StatusGroup>
      <VLine $h={20} /><StatusText $w={52}>页码: 1</StatusText>
      <VLine $h={20} /><StatusText $w={64}>页面: 1/1</StatusText>
      <VLine $h={20} /><StatusText $w={52}>节: 1/1</StatusText><StatusText $w={99}>设置值: 6.9厘米</StatusText>
      <VLine $h={20} /><StatusText $w={37}>行: 9</StatusText><StatusText $w={47}>列: 1</StatusText>
      <VLine $h={20} /><StatusText $w={50}>字数: 4</StatusText>
      <VLine $h={20} />
      <StatusButton><Icon sw={1}><path d="M6 1.500H.6v13.400H15.400V1.500H10M6 1.500l2 1.500 2-1.500M8 13v2.500M5.500 6l5 5M10.500 6l-5 5" /></Icon>拼写检查<Caret /></StatusButton>
      <VLine $h={20} />
      <StatusButton><Icon sw={1}><path d="M6 1.500H.6v13.400H6M10 1.500h5v5M6 1.500l2 1.500 2-1.500M12.500 12.500 15.500 15.500" /><circle cx="9.500" cy="9.500" r="4" fill="#e3e5e9" /></Icon>内容检查<Caret /></StatusButton>
      <VLine $h={20} />
    </StatusGroup>
    <StatusGroup>
      <ViewButton aria-label="护眼模式"><Icon><path d="M.6 9.500C4 4.500 12 4.500 15.400 9.500 12 14.500 4 14.500.6 9.500zM8 3V.5M3.500 4 2 2M12.500 4 14 2" /><circle cx="8" cy="9.500" r="2.600" /></Icon></ViewButton>
      <VLine $h={14} $m={9} />
      <ViewButton $on aria-label="页面视图"><Icon><path d="M1.500 1h10l3 3v11h-13zM4.500 7h7M4.500 10.500h7" /></Icon></ViewButton>
      <ViewButton aria-label="大纲视图"><Icon><path d="M0 1.500h2M4 1.500h11M3 5.800h1.500M6.500 5.800H15M3 10.200h1.500M6.500 10.200H15M3 14.500h1.500M6.500 14.500H15" /></Icon></ViewButton>
      <ViewButton aria-label="阅读版式"><Icon><path d="M8 15V3L6.500 1.500H.6v12H6.500zM8 3l1.500-1.500h5.900v12H9.500L8 15" /></Icon></ViewButton>
      <ViewButton aria-label="Web版式"><Icon sw={1}><circle cx="8" cy="8" r="7.200" /><ellipse cx="8" cy="8" rx="3.500" ry="7.200" /><path d="M8 1v14M1 8h14M2 4.500h12M2 11.500h12" /></Icon></ViewButton>
      <ViewButton aria-label="写作模式"><Icon><path d="M1 15 3 9.500 11.500 1c2-1 4 1 3 3L6.500 12zM3.500 9.500l3 2.500M8 15.400h8M1 15.400h3" /></Icon></ViewButton>
      <VLine $h={14} $m={9} />
      <ViewButton aria-label="适合页面"><Icon w={14} h={14}><path d="M.6 3.500V.6h2.900M10.500.6h2.900v2.900M13.400 10.500v2.900h-2.900M3.500 13.400H.6v-2.900M3.500 3.500h7v7h-7z" /></Icon></ViewButton>
      <ZoomValue>142% <Caret /></ZoomValue>
      <IconButton aria-label="缩小" $w={10}><Icon w={10} h={2} sw={2}><path d="M0 1h10" /></Icon></IconButton>
      <ZoomSlider type="range" aria-label="缩放" defaultValue={53} />
      <IconButton aria-label="放大" $w={10}><Icon w={10} h={10} sw={2}><path d="M5 0v10M0 5h10" /></Icon></IconButton>
      <ScreenButtons>
        <ViewButton aria-label="全屏"><Icon w={14} h={14}><path d="M.6 4V.6H4M.6.6l4 4M10 .6h3.400V4M13.400.6l-4 4M13.400 10v3.400H10M13.400 13.400l-4-4M4 13.400H.6V10M.6 13.400l4-4" /></Icon></ViewButton>
      </ScreenButtons>
    </StatusGroup>
  </StatusBar>
);

const Overlays = () => (
  <>
    <ArrowLayer width="100" height="150" viewBox="0 0 100 150" aria-hidden="true">
      <defs><filter id="sh" x="-20%" y="-20%" width="150%" height="150%"><feDropShadow dx="3" dy="3" stdDeviation="2.500" floodOpacity="0.550" /></filter></defs>
      <g filter="url(#sh)" fill="#f00"><path d="M10 7 29 22.500 24 25.500 91.500 137 89.500 139 88 138.500 20 28 12.500 32z" /></g>
    </ArrowLayer>
    <Floating $right={0} $bottom={127}><LevelMeter><i /></LevelMeter></Floating>
    <Floating $right={1} $bottom={86}>
      <SogouMark>
        <svg width="32" height="32" viewBox="0 0 32 32" aria-hidden="true">
          <path d="M3 5 24 1q3-.5 4 2l3 20q.5 3-2 4L9 31q-3 .5-4-2L1 9q-.5-3 2-4z" fill="#f4511e" />
          <path d="M26 6C17 5 7 7 7 12c0 6 18 2 18 7 0 4-9 6-17 4" fill="none" stroke="#fff" strokeWidth="4" />
        </svg>
      </SogouMark>
      <ImeBar>
        <span>中</span>
        <Icon w={12} h={14} color="#0b6fd8" sw={1.5}><circle cx="2.500" cy="4" r="1.700" /><path d="M10 7.500c.8 2 0 3.500-2 4.500" strokeWidth="2.400" /></Icon>
        <Icon w={12} h={16} color="#0b6fd8" sw={1.6}><rect x="3.500" y=".5" width="5" height="9" rx="2.500" fill="#0b6fd8" /><path d="M1 6.500c0 7 10 7 10 0M6 12v4M4 15.200h4" /></Icon>
        <Icon w={15} h={13} color="#0b6fd8" sw={1.5}><rect x=".8" y=".8" width="13.400" height="11.400" rx="1.500" /><path d="M3 4h9M3 6.800h9" strokeDasharray="1.800 1" /><path d="M4 9.800h7" /></Icon>
        <Icon w={13} h={13} color="none"><path d="M0 1.500Q0 0 1.500 0H6v6H0zM7.300 0h4.200Q13 0 13 3q0 3-2.800 3Q7.300 6 7.300 3zM0 7.300h6V13H1.500Q0 13 0 11.500zM7.300 7.300H13v4.200q0 1.500-1.500 1.500H7.300z" fill="#0b6fd8" /></Icon>
      </ImeBar>
    </Floating>
    <Floating $right={11} $bottom={7}>
      <svg width="44" height="42" viewBox="0 0 44 42" aria-hidden="true">
        <defs><linearGradient id="sw" x1="1" x2="0" y2="1"><stop stopColor="#6cc4ee" /><stop offset="1" stopColor="#2f7fd0" /></linearGradient></defs>
        <path d="M43 1C22-1 2 12 1 25c0 6 3 10 6 10C1 22 18 6 43 1z" fill="url(#sw)" opacity=".85" />
        <path d="M31 11c10 5 8 19-4 25-7 4-16 5-22 3 13-1 28-9 26-28z" fill="#4fba6d" opacity=".85" />
        <path d="M4 40c9-5 17-4 25-6-7 5-15 7-25 6z" fill="#e4d235" />
        <path d="M32 14C19 12 9 18 11 26c2 5 12 4 14-2 0-5-8-5-9 0" fill="none" stroke="#3f97dc" strokeWidth="3" opacity=".8" />
      </svg>
      <Watermark>极光下载站<small>www.xz7.com</small></Watermark>
    </Floating>
  </>
);

export default function App() {
  return (
    <Window>
      <GlobalStyle />
      <Title />
      <Ribbon><Menu /><Tools /></Ribbon>
      <Workspace>
        <VRuler><VScale>{vertical.map(n => <span key={n}>{n === 0 ? '' : Math.abs(n)}</span>)}</VScale></VRuler>
        <Document />
        <Scroll />
        <StylePanel />
        <SideRail />
      </Workspace>
      <Status />
      <Overlays />
    </Window>
  );
}
